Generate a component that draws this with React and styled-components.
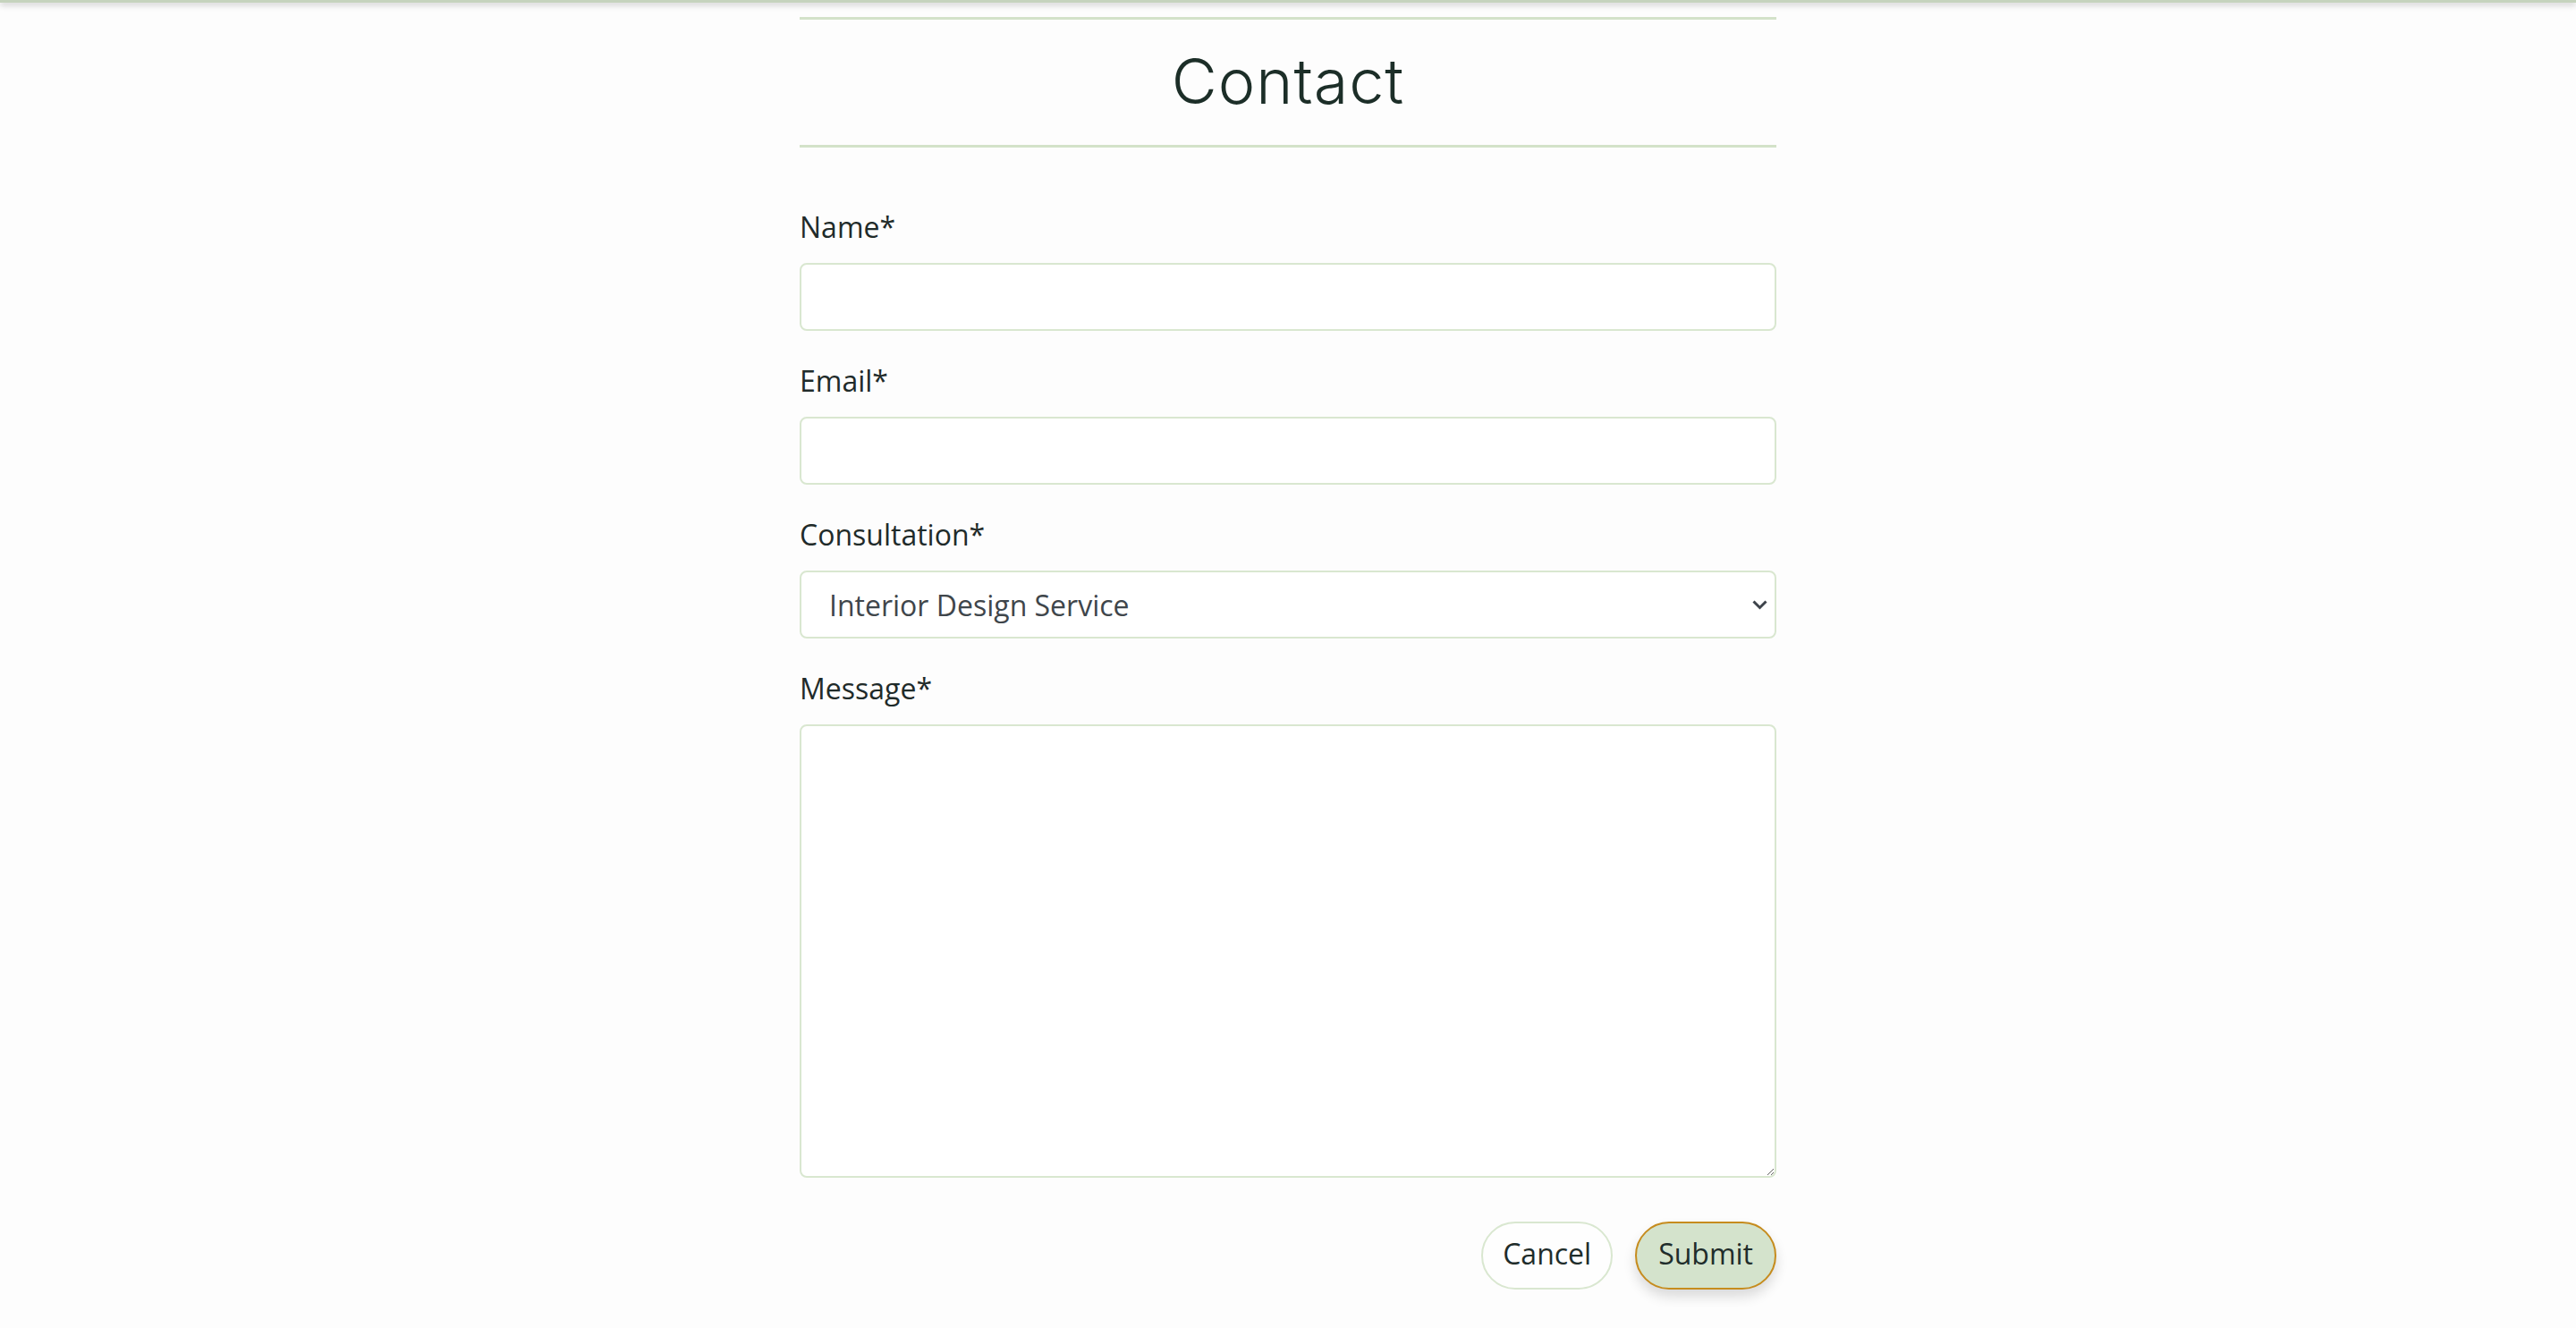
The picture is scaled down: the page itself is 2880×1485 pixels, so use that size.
import React from "react";
import styled, { createGlobalStyle } from "styled-components";

const Global = createGlobalStyle`
  html, body {
    margin: 0;
    padding: 0;
    background: #fdfdfd;
  }
  body {
    font-family: "Open Sans", "Noto Sans", sans-serif;
    color: #1f2b2a;
  }
  * { box-sizing: border-box; }
`;

const TopBar = styled.div`
  height: 3px;
  background: #c5d3bd;
  box-shadow: 0 2px 7px rgba(0, 0, 0, 0.32);
`;

const Page = styled.main`
  width: 1092px;
  margin: 0 auto;
  padding: 16px 0 40px;
`;

const Heading = styled.h1`
  margin: 0;
  border-top: 3px solid #d3e2c9;
  border-bottom: 3px solid #d3e2c9;
  padding: 4px 0 6px;
  line-height: 130px;
  text-align: center;
  font-family: "Inter", "Lato", sans-serif;
  font-weight: 300;
  font-size: 70px;
  letter-spacing: 1px;
  color: #1c2e28;
`;

const Form = styled.form`
  display: flex;
  flex-direction: column;
  gap: 30px;
  margin-top: 63px;
`;

const Field = styled.div`
  display: flex;
  flex-direction: column;
  gap: 16px;
`;

const Label = styled.label`
  padding-top: 2px;
  font-size: 32px;
  line-height: 48px;
  color: #1f2b2a;
`;

const fieldBase = `
  width: 100%;
  border: 2px solid #d9e7d0;
  border-radius: 8px;
  background: #ffffff;
  font-family: "Open Sans", "Noto Sans", sans-serif;
  font-size: 32px;
  color: #3f464b;
  outline: none;
`;

const Input = styled.input`
  ${fieldBase}
  height: 76px;
  padding: 0 31px;
`;

const SelectWrap = styled.div`
  position: relative;
`;

const Select = styled.select`
  ${fieldBase}
  height: 76px;
  padding: 0 60px 0 31px;
  appearance: none;
  -webkit-appearance: none;
`;

const Chevron = styled.svg`
  position: absolute;
  right: 10px;
  top: 33px;
  width: 17px;
  height: 11px;
  pointer-events: none;
`;

const TextArea = styled.textarea`
  ${fieldBase}
  height: 507px;
  padding: 20px 31px;
  resize: vertical;
`;

const Actions = styled.div`
  display: flex;
  justify-content: flex-end;
  gap: 25px;
  margin-top: 19px;
`;

const Button = styled.button`
  height: 76px;
  padding: 0 ${(p) => (p.$primary ? "24px" : "22px")} 5px;
  border-radius: 38px;
  font-family: "Open Sans", "Noto Sans", sans-serif;
  font-size: 32px;
  line-height: 1;
  color: #1f2d2b;
  cursor: pointer;
  border: 2px solid ${(p) => (p.$primary ? "#c68c1e" : "#d9e7d0")};
  background: ${(p) => (p.$primary ? "#d4e3cc" : "#fefefe")};
  box-shadow: ${(p) => (p.$primary ? "0 8px 14px rgba(0,0,0,0.14)" : "none")};
`;

export default function App() {
  return (
    <>
      <Global />
      <TopBar />
      <Page>
        <Heading>Contact</Heading>
        <Form onSubmit={(e) => e.preventDefault()}>
          <Field>
            <Label htmlFor="name">Name*</Label>
            <Input id="name" type="text" />
          </Field>
          <Field>
            <Label htmlFor="email">Email*</Label>
            <Input id="email" type="email" />
          </Field>
          <Field>
            <Label htmlFor="consult">Consultation*</Label>
            <SelectWrap>
              <Select id="consult" defaultValue="interior">
                <option value="interior">Interior Design Service</option>
                <option value="other">Other</option>
              </Select>
              <Chevron viewBox="0 0 17 11" fill="none">
                <path d="M1.5 1.5 L8.5 8.5 L15.5 1.5" stroke="#3d434a" strokeWidth="3" />
              </Chevron>
            </SelectWrap>
          </Field>
          <Field>
            <Label htmlFor="message">Message*</Label>
            <TextArea id="message" />
          </Field>
          <Actions>
            <Button type="button">Cancel</Button>
            <Button type="submit" $primary>Submit</Button>
          </Actions>
        </Form>
      </Page>
    </>
  );
}
